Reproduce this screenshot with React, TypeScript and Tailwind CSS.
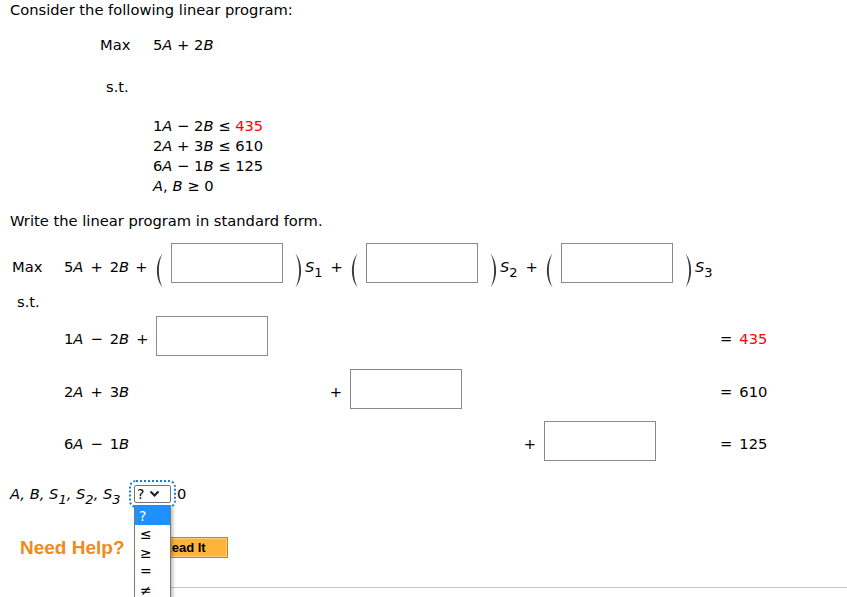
import React from "react";

function Paren({ open }: { open?: boolean }) {
  return (
    <svg width="8" height="35" viewBox="0 0 8 35" className="shrink-0 mt-[10px]">
      <path
        d={
          open
            ? "M7.6 0.5 C0 9 0 26 7.6 34.5 C2.6 26 2.6 9 7.6 0.5 Z"
            : "M0.4 0.5 C8 9 8 26 0.4 34.5 C5.4 26 5.4 9 0.4 0.5 Z"
        }
        fill="#3a3a3a"
      />
    </svg>
  );
}

function Box() {
  return <div className="w-[112px] h-[40px] shrink-0 border border-[#8a8a8a] bg-white" />;
}

function Sub({ n }: { n: string }) {
  return <span className="relative top-[5px] text-[13px]">{n}</span>;
}

function Op({ c }: { c: string }) {
  return <span className="mx-[7px]">{c}</span>;
}

function Slack({ n, plus }: { n: string; plus?: boolean }) {
  return (
    <div className="flex items-start">
      <Paren open />
      <div className="ml-[8px]">
        <Box />
      </div>
      <div className="ml-[12px]">
        <Paren />
      </div>
      <span className="mt-[14px] w-[47px] whitespace-pre pl-[2px]">
        <i>S</i>
        <Sub n={n} />
        {plus ? <span className="ml-[8px]">+</span> : null}
      </span>
    </div>
  );
}

function Rhs({ v, red }: { v: string; red?: boolean }) {
  return (
    <div className="mt-[13px] whitespace-pre">
      =<span className={"ml-[7px] " + (red ? "text-[#ff0000]" : "")}>{v}</span>
    </div>
  );
}

export default function App() {
  return (
    <div className="relative w-[847px] h-[597px] overflow-hidden bg-white text-black font-['DejaVu_Sans',sans-serif] text-[14.7px] leading-5">
      <div className="pl-[10px]">Consider the following linear program:</div>

      <div className="flex pl-[100px] mt-[15px]">
        <span className="w-[53px]">Max</span>
        <span className="whitespace-pre">
          5<i>A</i> + 2<i>B</i>
        </span>
      </div>

      <div className="pl-[106px] mt-[22px]">s.t.</div>

      <div className="pl-[153px] mt-[19px] whitespace-pre">
        <div>
          1<i>A</i> − 2<i>B</i> ≤ <span className="text-[#ff0000]">435</span>
        </div>
        <div>
          2<i>A</i> + 3<i>B</i> ≤ 610
        </div>
        <div>
          6<i>A</i> − 1<i>B</i> ≤ 125
        </div>
        <div>
          <i>A</i>, <i>B</i> ≥ 0
        </div>
      </div>

      <div className="pl-[10px] mt-[15px]">Write the linear program in standard form.</div>

      <div className="flex items-start h-[40px] mt-[12px] pl-[12px]">
        <span className="w-[52px] mt-[14px]">Max</span>
        <span className="w-[91px] mt-[14px] whitespace-pre">
          5<i>A</i>
          <Op c="+" />2<i>B</i>
          <span className="ml-[6px]">+</span>
        </span>
        <Slack n="1" plus />
        <Slack n="2" plus />
        <Slack n="3" />
      </div>

      <div className="pl-[17px] mt-[9px]">s.t.</div>

      <div className="flex h-[40px] mt-[4px]">
        <div className="w-[156px] pl-[64px] mt-[13px] whitespace-pre">
          1<i>A</i>
          <Op c="−" />2<i>B</i>
          <span className="ml-[7px]">+</span>
        </div>
        <div className="w-[194px]">
          <Box />
        </div>
        <div className="w-[194px]" />
        <div className="w-[176px]" />
        <Rhs v="435" red />
      </div>

      <div className="flex h-[40px] mt-[13px]">
        <div className="w-[156px] pl-[64px] mt-[13px] whitespace-pre">
          2<i>A</i>
          <Op c="+" />3<i>B</i>
        </div>
        <div className="w-[194px] flex justify-end pr-[8px] mt-[13px]">+</div>
        <div className="w-[194px]">
          <Box />
        </div>
        <div className="w-[176px]" />
        <Rhs v="610" />
      </div>

      <div className="flex h-[40px] mt-[12px]">
        <div className="w-[156px] pl-[64px] mt-[13px] whitespace-pre">
          6<i>A</i>
          <Op c="−" />1<i>B</i>
        </div>
        <div className="w-[194px]" />
        <div className="w-[194px] flex justify-end pr-[8px] mt-[13px]">+</div>
        <div className="w-[176px]">
          <Box />
        </div>
        <Rhs v="125" />
      </div>

      <div className="flex items-center h-[30px] mt-[18px] pl-[10px]">
        <span className="italic whitespace-pre w-[124px]">
          A, B, S<Sub n="1" />, S<Sub n="2" />, S<Sub n="3" />
        </span>
        <div className="w-[37px] h-[18px] flex items-center bg-white border border-[#767676] rounded-[2px] outline-2 outline-dotted outline-[#1a7bd6] outline-offset-[3px]">
          <span className="pl-[2px] text-[14px] leading-4">?</span>
          <svg width="11" height="8" viewBox="0 0 11 8" className="ml-[5px]">
            <path d="M1.5 1.5 L5.5 5.5 L9.5 1.5" fill="none" stroke="#222" strokeWidth="2.2" />
          </svg>
        </div>
        <span className="ml-[6px]">0</span>
      </div>

      <div className="flex items-center h-[21px] mt-[28px] pl-[20px]">
        <span className="w-[120px] font-['Liberation_Sans',Arial,sans-serif] font-bold text-[19px] text-[#f08a1e]">
          Need Help?
        </span>
        <div className="w-[88px] h-[21px] flex items-center justify-center border border-[#c9801c] bg-[#fcb43b] shadow-[inset_0_0_0_1px_#fdd182] font-['Liberation_Sans',Arial,sans-serif] font-bold text-[13px] leading-4">
          Read It
        </div>
      </div>

      <div className="ml-[140px] mt-[29px] border-t border-[#c4c4c4]" />

      <div className="absolute left-[134px] top-[505px] w-[37px] h-[110px] bg-white border border-[#7a7a7a] shadow-[2px_2px_3px_rgba(0,0,0,0.25)] text-[14px]">
        <div className="h-[19px] pl-[4px] flex items-center bg-[#1e90ff] text-white">?</div>
        <div className="h-[18.5px] pl-[5px] flex items-center">≤</div>
        <div className="h-[18.5px] pl-[5px] flex items-center">≥</div>
        <div className="h-[18.5px] pl-[5px] flex items-center">=</div>
        <div className="h-[18.5px] pl-[5px] flex items-center">≠</div>
      </div>
    </div>
  );
}
